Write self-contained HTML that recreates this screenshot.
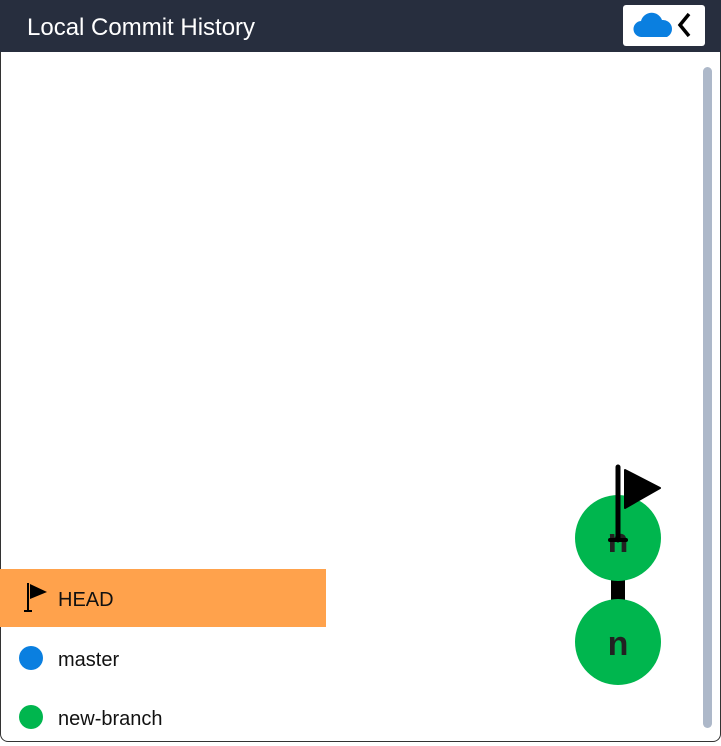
<html><head><style>
body{margin:0;width:721px;height:743px;background:#fff;font-family:"Liberation Sans",sans-serif;overflow:hidden;position:relative}
.hdr{position:absolute;left:0;top:0;width:721px;height:52px;background:#272e3e}
.hdr .t{position:absolute;left:27px;top:14px;color:#fff;font-size:24px}
.btn{position:absolute;left:623px;top:5px;width:82px;height:41px;background:#fff;border-radius:3px}
.box{position:absolute;left:0;top:52px;width:719px;height:689px;border:1px solid #333;border-top:none;border-radius:0 0 8px 8px}
.sb{position:absolute;left:703px;top:67px;width:9px;height:661px;background:#adb8c9;border-radius:5px}
.row{position:absolute;left:0;width:326px;height:58px;font-size:20px;color:#111}
.row span{position:absolute;left:58px;top:20px}
.dot{position:absolute;left:19px;top:17px;width:24px;height:24px;border-radius:50%}
</style></head><body>
<div class="hdr"><div class="t">Local Commit History</div>
<div class="btn"><svg width="82" height="41"><path d="M19 32 a8 8 0 0 1 -1-16 a11 11 0 0 1 21-1 a9 9 0 0 1 5 17 z" fill="#0a7fe0"/><path d="M66 9 L57 20 L66 31" stroke="#000" stroke-width="3.5" fill="none"/></svg></div></div>
<div class="box"></div>
<div class="sb"></div>
<svg style="position:absolute;left:0;top:0" width="721" height="743">
<rect x="611" y="575" width="14" height="30" fill="#000"/>
<circle cx="618" cy="538" r="43" fill="#00b64e"/>
<circle cx="618" cy="642" r="43" fill="#00b64e"/>
<text x="618" y="552" font-size="34" font-family="Liberation Sans" font-weight="bold" text-anchor="middle" fill="#222">n</text>
<text x="618" y="655" font-size="34" font-family="Liberation Sans" font-weight="bold" text-anchor="middle" fill="#222">n</text>
<line x1="618" y1="467" x2="618" y2="540" stroke="#000" stroke-width="5" stroke-linecap="round"/>
<line x1="610" y1="540" x2="626" y2="540" stroke="#000" stroke-width="4" stroke-linecap="round"/>
<path d="M625 470 L660 488 L625 508 Z" fill="#000" stroke="#000" stroke-width="2" stroke-linejoin="round"/>
</svg>
<div class="row" style="top:569px;background:#ffa24c"><svg style="position:absolute;left:22px;top:12px" width="30" height="34"><line x1="6" y1="2" x2="6" y2="30" stroke="#000" stroke-width="2"/><line x1="2" y1="30" x2="10" y2="30" stroke="#000" stroke-width="2"/><path d="M8 3 L25 11 L8 18 Z" fill="#000"/></svg><span>HEAD</span></div>
<div class="row" style="top:629px"><div class="dot" style="background:#0a7fe0"></div><span>master</span></div>
<div class="row" style="top:688px"><div class="dot" style="background:#00b64e"></div><span>new-branch</span></div>
</body></html>
